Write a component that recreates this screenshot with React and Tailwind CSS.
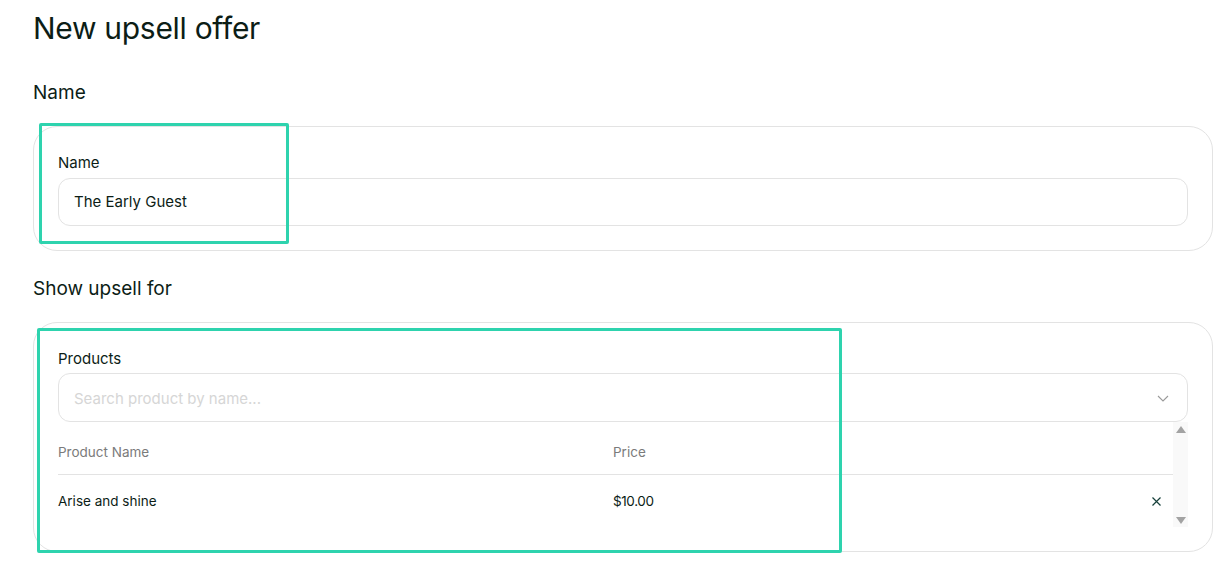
import React from "react";

const font = { fontFamily: "Inter, 'Noto Sans', sans-serif" };

const ScrollTrack = () => (
  <div className="w-[15px] self-stretch flex flex-col justify-between items-center bg-[#f9f9f9] pt-[4px] pb-[3px]">
    <svg width="10" height="7" viewBox="0 0 10 7">
      <path d="M5 0 L10 7 L0 7 Z" fill="#a3a3a3" />
    </svg>
    <svg width="10" height="7" viewBox="0 0 10 7">
      <path d="M0 0 L10 0 L5 7 Z" fill="#a3a3a3" />
    </svg>
  </div>
);

const Highlight = ({ className }) => (
  <div
    className={`pointer-events-none absolute border-[3px] border-[#2ed3ae] rounded-[2px] ${className}`}
  />
);

export default function App() {
  return (
    <div className="min-h-screen bg-white text-[#0c1d16] pl-[33px] pr-[15px] pt-[10px]" style={font}>
      <h1 className="text-[30px] leading-9 tracking-[-0.3px]">New upsell offer</h1>

      <h2 className="mt-[33px] text-[19px] leading-7">Name</h2>
      <div className="relative mt-[19px] border border-[#e3e3e3] rounded-[24px] px-6 pt-[25px] pb-6">
        <Highlight className="left-[5px] -top-[4px] w-[250px] h-[121px]" />
        <label className="block text-[15px] leading-[22px]">Name</label>
        <div className="mt-[4px] h-12 border border-[#e3e3e3] rounded-xl flex items-center pl-[15px] pr-4 text-[15px]">
          The Early Guest
        </div>
      </div>

      <h2 className="mt-6 text-[19px] leading-7">Show upsell for</h2>
      <div className="relative mt-[19px] border border-[#e3e3e3] rounded-[24px] px-6 pt-[25px] pb-6">
        <Highlight className="left-[3px] top-[5px] w-[805px] h-[225px]" />
        <label className="block text-[15px] leading-[22px]">Products</label>
        <div className="mt-[3px] h-[49px] border border-[#e3e3e3] rounded-xl flex items-center justify-between pl-[15px] pr-[18px]">
          <span className="pt-[3px] text-[15px] text-[#d6d6d6]">Search product by name...</span>
          <svg className="mt-[2px]" width="12" height="7" viewBox="0 0 12 7" fill="none">
            <path d="M1 1 L6 6 L11 1" stroke="#9a9a9a" strokeWidth="1.1" />
          </svg>
        </div>
        <div className="flex h-[105px]">
          <div className="flex-1 flex flex-col">
            <div className="h-[53px] flex items-end pb-[12px] border-b border-[#e3e3e3] text-[13.5px] text-[#7b7b7b]">
              <div className="w-[555px]">Product Name</div>
              <div>Price</div>
            </div>
            <div className="h-[52px] flex items-center text-[13.5px] pt-[1px]">
              <div className="w-[555px]">Arise and shine</div>
              <div className="flex-1 tracking-[-0.4px]">$10.00</div>
              <svg className="mr-[12px]" width="9" height="9" viewBox="0 0 9 9" fill="none">
                <path d="M0.5 0.5 L8.5 8.5 M8.5 0.5 L0.5 8.5" stroke="#17403a" strokeWidth="1.2" />
              </svg>
            </div>
          </div>
          <ScrollTrack />
        </div>
      </div>
    </div>
  );
}
